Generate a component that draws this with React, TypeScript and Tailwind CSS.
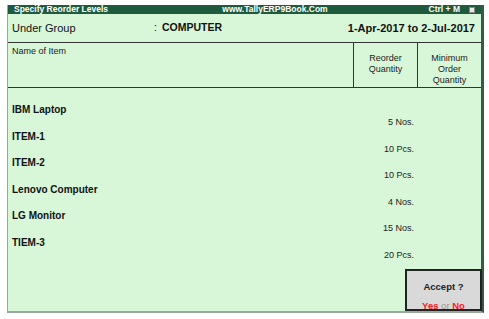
const items = [
  { name: "IBM Laptop", qty: "5 Nos." },
  { name: "ITEM-1", qty: "10 Pcs." },
  { name: "ITEM-2", qty: "10 Pcs." },
  { name: "Lenovo Computer", qty: "4 Nos." },
  { name: "LG Monitor", qty: "15 Nos." },
  { name: "TIEM-3", qty: "20 Pcs." },
];

export default function App() {
  return (
    <div
      className="w-[489px] h-[319px] bg-white overflow-hidden pt-[5px] pl-[7px]"
      style={{ fontFamily: '"Liberation Sans", Arial, sans-serif' }}
    >
      <div className="relative w-[477px] h-[308px] flex flex-col bg-[#d8f6d8] border-l border-b-2 border-[#9aa89a] border-r-[3px] border-r-[#35594a]">
        {/* Title bar */}
        <div className="h-[9px] bg-[#1e5a3b] text-white font-bold text-[8.5px] leading-[9px] flex items-center px-[6px] overflow-hidden">
          <span className="w-[150px] whitespace-nowrap">Specify Reorder Levels</span>
          <span className="flex-1 text-center pl-[12px] whitespace-nowrap">www.TallyERP9Book.Com</span>
          <span className="w-[95px] text-right pr-[9px] whitespace-nowrap">Ctrl + M</span>
          <span className="w-[6px] h-[6px] bg-[#e8e8e8] border border-[#888]" />
        </div>

        {/* Group row */}
        <div className="h-[29px] flex items-center px-[4px] text-[11px] text-[#111] border-b border-[#333]">
          <span className="w-[142px]">Under Group</span>
          <span className="font-bold text-[10.5px]">
            <span className="font-normal mr-[5px]">:</span>COMPUTER
          </span>
          <span className="ml-auto font-bold pr-[2px]">1-Apr-2017 to 2-Jul-2017</span>
        </div>

        {/* Column header */}
        <div className="h-[45px] flex text-[9px] text-[#222] border-b border-[#333]">
          <div className="flex-1 px-[4px] pt-[2px]">Name of Item</div>
          <div className="w-[64px] border-l border-[#333] flex flex-col items-center pt-[10px] leading-[11px]">
            <span>Reorder</span>
            <span>Quantity</span>
          </div>
          <div className="w-[64px] border-l border-[#333] flex flex-col items-center pt-[10px] leading-[11px]">
            <span>Minimum</span>
            <span>Order</span>
            <span>Quantity</span>
          </div>
        </div>

        {/* Items */}
        <div className="flex-1 pt-[15px]">
          {items.map((it) => (
            <div key={it.name} className="h-[26.6px] flex flex-col leading-[13px] text-[#111]">
              <div className="pl-[4px] font-bold text-[10px]">{it.name}</div>
              <div className="flex text-[9px]">
                <div className="flex-1" />
                <div className="w-[64px] text-right pr-[3px] text-[#222]">{it.qty}</div>
                <div className="w-[64px]" />
              </div>
            </div>
          ))}
        </div>

        {/* Accept box */}
        <div className="absolute left-[397px] bottom-0 w-[77px] h-[42px] bg-[#d9d9d9] border-2 border-[#222] flex flex-col items-center font-bold text-[9.5px] leading-[12px]">
          <span className="mt-[10px] text-[#222]">Accept ?</span>
          <span className="mt-[7px]">
            <span className="text-[#ff1a1a]">Yes</span>
            <span className="text-[#999] font-normal"> or </span>
            <span className="text-[#ff1a1a]">No</span>
          </span>
        </div>
      </div>
    </div>
  );
}
